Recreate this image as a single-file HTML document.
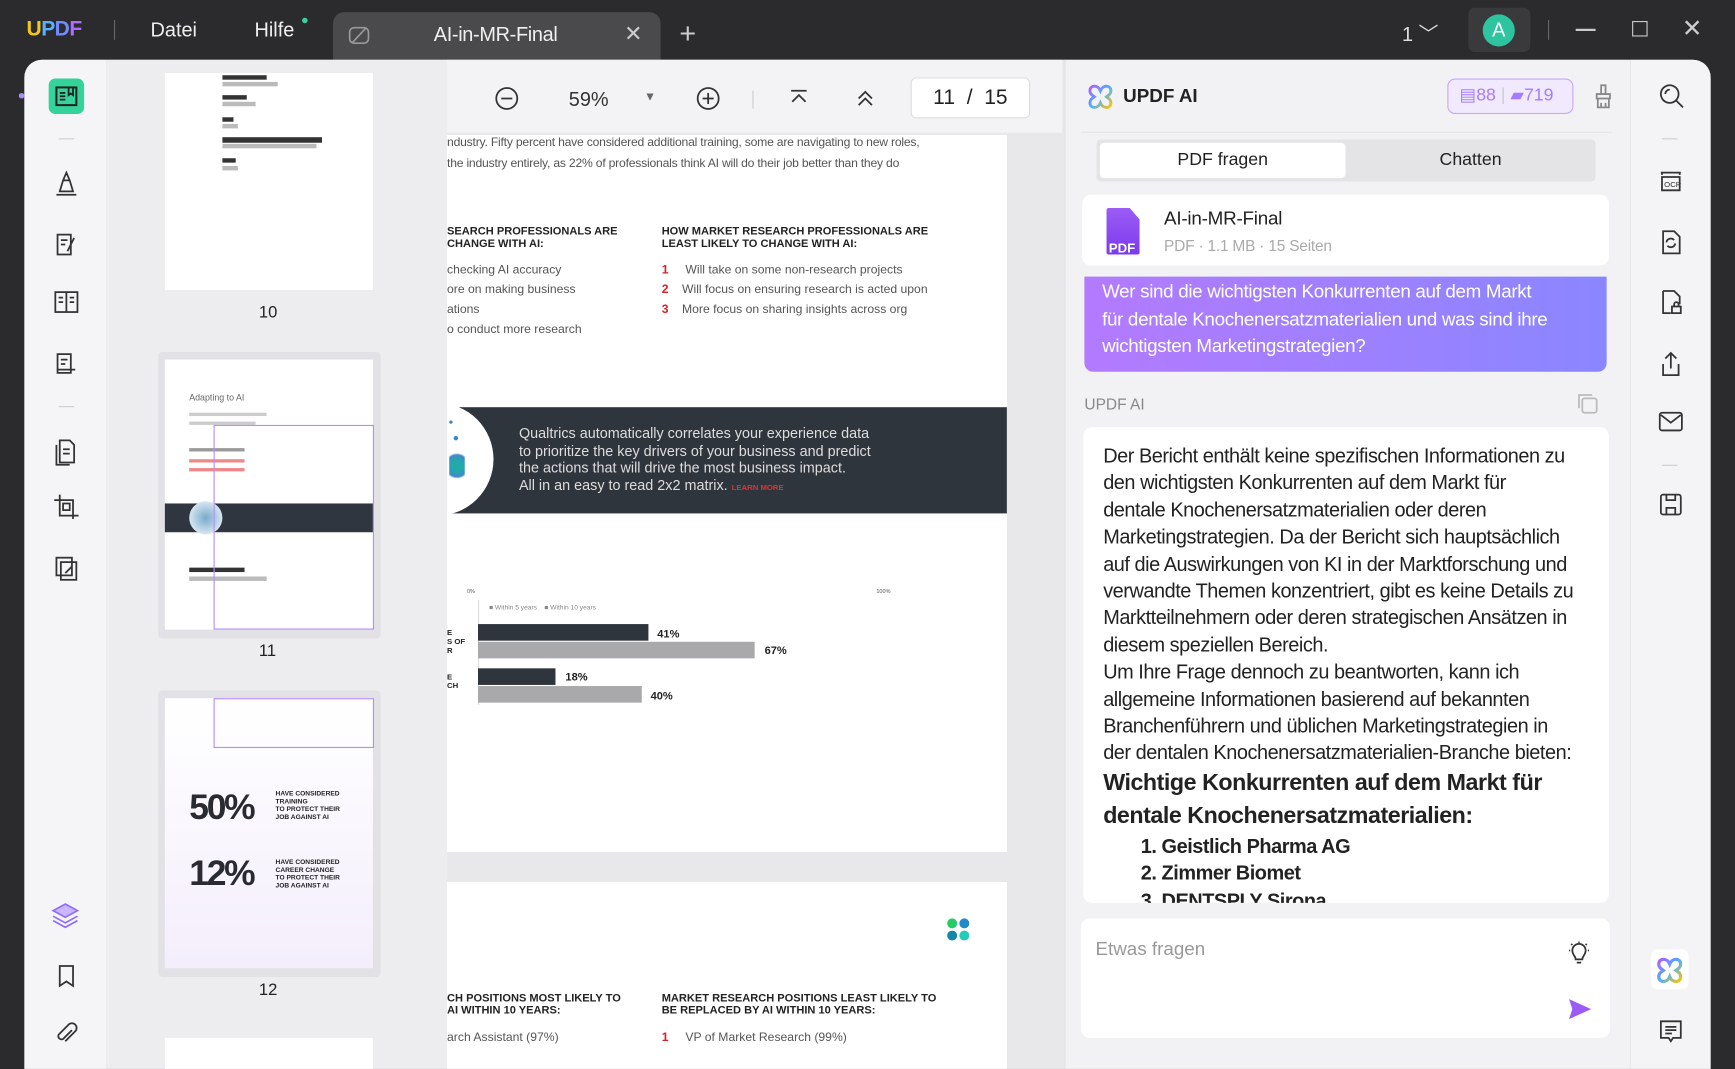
<!DOCTYPE html>
<html><head><meta charset="utf-8"><style>
*{margin:0;padding:0;box-sizing:border-box}
html,body{width:1735px;height:1069px;overflow:hidden;background:#2b2b2d;font-family:"Liberation Sans",sans-serif}
#w{position:absolute;left:0;top:0;width:1568px;height:966px;transform:scale(1.10651);transform-origin:0 0;background:#2b2b2d}
.a{position:absolute}
.ic{position:absolute;stroke:#333;fill:none;stroke-width:1.6}
.t{font-size:11px;color:#555;position:absolute;white-space:nowrap}
.h{font-size:10px;font-weight:bold;color:#222;position:absolute;line-height:11px}
.n{color:#d81f2a;font-weight:bold}
</style></head><body><div id="w">
<div class="a" style="left:24px;top:16px;font-size:19px;font-weight:bold;letter-spacing:-0.5px"><span style="color:#f5c518">U</span><span style="color:#5ab0ff">P</span><span style="color:#6f8bff">D</span><span style="color:#b06cff">F</span></div>
<div class="a" style="left:103px;top:18px;width:1px;height:18px;background:#666"></div>
<div class="a" style="left:136px;top:17px;color:#eee;font-size:18px">Datei</div>
<div class="a" style="left:230px;top:17px;color:#eee;font-size:18px">Hilfe</div>
<div class="a" style="left:273px;top:16px;width:5px;height:5px;border-radius:50%;background:#3ad0a0"></div>
<div class="a" style="left:301px;top:11px;width:296px;height:48px;background:#4a4a4c;border-radius:10px 10px 0 0"></div>
<svg class="a" style="left:314px;top:22px" width="22" height="20" viewBox="0 0 22 20"><rect x="2" y="3" width="17" height="14" rx="4" fill="none" stroke="#999" stroke-width="1.5"/><path d="M4 17L17 3" stroke="#999" stroke-width="1.5"/></svg>
<div class="a" style="left:392px;top:21px;color:#f0f0f0;font-size:18px;letter-spacing:-0.3px">AI-in-MR-Final</div>
<div class="a" style="left:564px;top:18px;color:#ccc;font-size:20px">✕</div>
<div class="a" style="left:614px;top:15px;color:#ccc;font-size:26px;font-weight:300">+</div>
<div class="a" style="left:1267px;top:17px;color:#ddd;font-size:18px">1 ﹀</div>
<div class="a" style="left:1327px;top:7px;width:56px;height:40px;background:#3a3a3c;border-radius:6px"></div>
<div class="a" style="left:1340px;top:13px;width:29px;height:29px;border-radius:50%;background:#2ec4a0;color:#fff;font-size:18px;text-align:center;line-height:29px">A</div>
<div class="a" style="left:1399px;top:18px;width:1px;height:18px;background:#666"></div>
<div class="a" style="left:1424px;top:26px;width:18px;height:1.5px;background:#ccc"></div>
<div class="a" style="left:1475px;top:19px;width:14px;height:14px;border:1.5px solid #ccc"></div>
<div class="a" style="left:1520px;top:13px;color:#ccc;font-size:22px">✕</div>

<div class="a" style="left:22px;top:54px;width:1524px;height:912px;background:#f3f3f5;border-radius:16px 16px 0 0;overflow:hidden">
  <div class="a" style="left:0;top:0;width:75px;height:912px;background:#f5f5f7;border-right:1px solid #e6e6e8"></div>
  <div class="a" style="left:22px;top:17px;width:32px;height:32px;border-radius:6px;background:#34d39a"></div>
  <svg class="a" style="left:26px;top:21px" width="24" height="24" viewBox="0 0 24 24"><rect x="3" y="4" width="18" height="16" fill="none" stroke="#222" stroke-width="1.8"/><path d="M6 9h5M6 12h5M6 15h5M14 4v7l2-1.5 2 1.5V4" stroke="#222" stroke-width="1.6" fill="none"/></svg>
  <div class="a" style="left:31px;top:71px;width:14px;height:1px;background:#ccc"></div>
  <svg class="ic" style="left:24px;top:98px" width="28" height="28" viewBox="0 0 28 28"><path d="M8 21l3-10 6 0 3 10zM11 11l3-7 3 7M5 24h18"/></svg>
  <svg class="ic" style="left:24px;top:153px" width="28" height="28" viewBox="0 0 28 28"><path d="M6 5h12v18H6zM9 10h6M9 14h4M21 8l-6 12"/></svg>
  <svg class="ic" style="left:24px;top:205px" width="28" height="28" viewBox="0 0 28 28"><rect x="4" y="5" width="20" height="18"/><path d="M14 5v18M7 10h4M7 14h4M17 10h4M17 14h4"/></svg>
  <svg class="ic" style="left:24px;top:260px" width="28" height="28" viewBox="0 0 28 28"><path d="M6 6h12v17H6zM9 11h6M9 15h4M6 20h16"/></svg>
  <div class="a" style="left:31px;top:313px;width:14px;height:1px;background:#ccc"></div>
  <svg class="ic" style="left:24px;top:340px" width="28" height="28" viewBox="0 0 28 28"><path d="M8 4h9l4 4v16H8zM11 12h6M11 16h6M5 8v18h12"/></svg>
  <svg class="ic" style="left:24px;top:390px" width="28" height="28" viewBox="0 0 28 28"><path d="M8 3v19h17M3 8h17v17M11 11h6v6h-6z"/></svg>
  <svg class="ic" style="left:24px;top:445px" width="28" height="28" viewBox="0 0 28 28"><rect x="5" y="5" width="14" height="16"/><rect x="9" y="9" width="14" height="16"/><path d="M13 19l6-6"/></svg>
  <svg class="a" style="left:22px;top:758px" width="30" height="30" viewBox="0 0 30 30"><path d="M15 5l11 6-11 6-11-6z" fill="#c9b6ff" stroke="#8f6bff" stroke-width="1.5"/><path d="M4 16l11 6 11-6M4 20l11 6 11-6" fill="none" stroke="#8f6bff" stroke-width="1.5"/></svg>
  <svg class="ic" style="left:25px;top:815px" width="26" height="26" viewBox="0 0 26 26"><path d="M7 4h12v18l-6-4-6 4z"/></svg>
  <svg class="ic" style="left:25px;top:868px" width="26" height="26" viewBox="0 0 26 26"><path d="M18 9l-8 8a3 3 0 0 1-4-4l9-9a4 4 0 0 1 6 6l-9 9"/></svg>

  <div class="a" style="left:76px;top:0;width:306px;height:912px;background:#ededf0"></div>
  <div class="a" style="left:127px;top:12px;width:188px;height:196px;background:#fff">
    <div class="a" style="left:52px;top:2px;width:40px;height:4px;background:#333"></div><div class="a" style="left:52px;top:8px;width:50px;height:4px;background:#bbb"></div>
    <div class="a" style="left:52px;top:20px;width:22px;height:4px;background:#333"></div><div class="a" style="left:52px;top:26px;width:30px;height:4px;background:#bbb"></div>
    <div class="a" style="left:52px;top:40px;width:10px;height:4px;background:#333"></div><div class="a" style="left:52px;top:46px;width:14px;height:4px;background:#bbb"></div>
    <div class="a" style="left:52px;top:58px;width:90px;height:5px;background:#333"></div><div class="a" style="left:52px;top:64px;width:85px;height:4px;background:#bbb"></div>
    <div class="a" style="left:52px;top:77px;width:12px;height:4px;background:#333"></div><div class="a" style="left:52px;top:84px;width:14px;height:4px;background:#bbb"></div>
  </div>
  <div class="a" style="left:212px;top:220px;font-size:15px;color:#222">10</div>
  <div class="a" style="left:121px;top:264px;width:201px;height:259px;background:#e2e2e6;border-radius:4px"></div>
  <div class="a" style="left:127px;top:271px;width:188px;height:244px;background:#fff">
    <div class="t" style="left:22px;top:30px;font-size:8px;color:#666">Adapting to AI</div>
    <div class="a" style="left:22px;top:48px;width:70px;height:3px;background:#ccc"></div>
    <div class="a" style="left:22px;top:56px;width:60px;height:3px;background:#ccc"></div>
    <div class="a" style="left:22px;top:80px;width:50px;height:3px;background:#999"></div>
    <div class="a" style="left:22px;top:90px;width:50px;height:3px;background:#e88"></div>
    <div class="a" style="left:22px;top:98px;width:50px;height:3px;background:#e88"></div>
    <div class="a" style="left:0;top:130px;width:188px;height:26px;background:#2f3640"></div>
    <div class="a" style="left:22px;top:128px;width:30px;height:30px;border-radius:50%;background:radial-gradient(#7ac,#fff)"></div>
    <div class="a" style="left:22px;top:188px;width:50px;height:4px;background:#333"></div><div class="a" style="left:22px;top:196px;width:70px;height:4px;background:#bbb"></div>
  </div>
  <div class="a" style="left:171px;top:330px;width:145px;height:185px;border:1.5px solid #b48cff"></div>
  <div class="a" style="left:212px;top:526px;font-size:15px;color:#222">11</div>
  <div class="a" style="left:121px;top:570px;width:201px;height:259px;background:#e2e2e6;border-radius:4px"></div>
  <div class="a" style="left:127px;top:577px;width:188px;height:244px;background:linear-gradient(#fff,#f4eefc)">
    <div class="a" style="left:22px;top:80px;font-size:32px;font-weight:bold;color:#2a2a33;letter-spacing:-2px">50%</div>
    <div class="a" style="left:22px;top:140px;font-size:32px;font-weight:bold;color:#2a2a33;letter-spacing:-2px">12%</div>
    <div class="h" style="left:100px;top:84px;font-size:6px;line-height:7px">HAVE CONSIDERED<br>TRAINING<br>TO PROTECT THEIR<br>JOB AGAINST AI</div>
    <div class="h" style="left:100px;top:146px;font-size:6px;line-height:7px">HAVE CONSIDERED<br>CAREER CHANGE<br>TO PROTECT THEIR<br>JOB AGAINST AI</div>
  </div>
  <div class="a" style="left:171px;top:577px;width:145px;height:45px;border:1.5px solid #b48cff"></div>
  <div class="a" style="left:212px;top:832px;font-size:15px;color:#222">12</div>
  <div class="a" style="left:127px;top:884px;width:188px;height:30px;background:#fff"></div>

  <div class="a" style="left:382px;top:0;width:558px;height:912px;background:#e8e8eb"></div>
  <div class="a" style="left:382px;top:0;width:556px;height:66px;background:#f3f3f5"></div>
  <svg class="ic" style="left:425px;top:24px" width="22" height="22" viewBox="0 0 22 22"><circle cx="11" cy="11" r="9.5"/><path d="M6 11h10"/></svg>
  <div class="a" style="left:492px;top:26px;font-size:18px;color:#333">59%</div>
  <div class="a" style="left:560px;top:28px;font-size:11px;color:#666">▼</div>
  <svg class="ic" style="left:607px;top:24px" width="22" height="22" viewBox="0 0 22 22"><circle cx="11" cy="11" r="9.5"/><path d="M6 11h10M11 6v10"/></svg>
  <div class="a" style="left:658px;top:28px;width:1px;height:16px;background:#ccc"></div>
  <svg class="ic" style="left:690px;top:26px" width="20" height="18" viewBox="0 0 20 18"><path d="M3 2h14M4 12l6-6 6 6"/></svg>
  <svg class="ic" style="left:750px;top:26px" width="20" height="18" viewBox="0 0 20 18"><path d="M4 9l6-6 6 6M4 15l6-6 6 6"/></svg>
  <div class="a" style="left:801px;top:16px;width:108px;height:37px;background:#fff;border:1px solid #ddd;border-radius:5px;font-size:19px;color:#222;text-align:center;line-height:35px">11 &nbsp;/&nbsp; 15</div>
  <div class="a" style="left:382px;top:68px;width:506px;height:648px;background:#fff;overflow:hidden">
    <div class="t" style="left:0;top:1px;letter-spacing:-0.2px">ndustry. Fifty percent have considered additional training, some are navigating to new roles,</div>
    <div class="t" style="left:0;top:20px;letter-spacing:-0.2px">the industry entirely, as 22% of professionals think AI will do their job better than they do</div>
    <div class="h" style="left:0;top:82px">SEARCH PROFESSIONALS ARE<br>CHANGE WITH AI:</div>
    <div class="h" style="left:194px;top:82px">HOW MARKET RESEARCH PROFESSIONALS ARE<br>LEAST LIKELY TO CHANGE WITH AI:</div>
    <div class="t" style="left:0;top:116px">checking AI accuracy</div>
    <div class="t" style="left:0;top:134px">ore on making business</div>
    <div class="t" style="left:0;top:152px">ations</div>
    <div class="t" style="left:0;top:170px">o conduct more research</div>
    <div class="t" style="left:194px;top:116px"><span class="n">1</span>&nbsp;&nbsp;&nbsp;&nbsp;&nbsp;Will take on some non-research projects</div>
    <div class="t" style="left:194px;top:134px"><span class="n">2</span>&nbsp;&nbsp;&nbsp;&nbsp;Will focus on ensuring research is acted upon</div>
    <div class="t" style="left:194px;top:152px"><span class="n">3</span>&nbsp;&nbsp;&nbsp;&nbsp;More focus on sharing insights across org</div>
    <div class="a" style="left:0;top:246px;width:506px;height:96px;background:#2f353c"></div>
    <div class="a" style="left:-60px;top:242px;width:102px;height:102px;border-radius:50%;background:#fff"></div>
    <div class="a" style="left:2px;top:258px;width:3px;height:3px;border-radius:50%;background:#38c"></div>
    <div class="a" style="left:6px;top:272px;width:4px;height:4px;border-radius:50%;background:#38c"></div>
    <div class="a" style="left:2px;top:284px;width:14px;height:30px;background:radial-gradient(circle,#2aa 30%,#48c 60%,transparent 70%)"></div>
    <div class="a" style="left:65px;top:262px;color:#ddd;font-size:13px;line-height:15.5px">Qualtrics automatically correlates your experience data<br>to prioritize the key drivers of your business and predict<br>the actions that will drive the most business impact.<br>All in an easy to read 2x2 matrix. <span style="color:#d33;font-size:7px;font-weight:bold">LEARN MORE</span></div>
    <div class="t" style="left:18px;top:410px;font-size:5px">0%</div><div class="t" style="left:388px;top:410px;font-size:5px">100%</div>
    <div class="t" style="left:38px;top:425px;font-size:6px;color:#888">■ Within 5 years &nbsp;&nbsp; ■ Within 10 years</div>
    <div class="a" style="left:28px;top:420px;width:1px;height:95px;background:#ddd"></div>
    <div class="a" style="left:28px;top:442px;width:154px;height:15px;background:#2f353c"></div><div class="h" style="left:190px;top:446px">41%</div>
    <div class="a" style="left:28px;top:458px;width:250px;height:15px;background:#a9a9ab"></div><div class="h" style="left:287px;top:461px">67%</div>
    <div class="a" style="left:28px;top:482px;width:70px;height:15px;background:#2f353c"></div><div class="h" style="left:107px;top:485px">18%</div>
    <div class="a" style="left:28px;top:498px;width:148px;height:15px;background:#a9a9ab"></div><div class="h" style="left:184px;top:502px">40%</div>
    <div class="h" style="left:0;top:447px;font-size:7px;line-height:8px">E<br>S OF<br>R</div>
    <div class="h" style="left:0;top:487px;font-size:7px;line-height:8px">E<br>CH</div>
  </div>
  <div class="a" style="left:382px;top:743px;width:506px;height:169px;background:#fff;overflow:hidden">
    <div class="a" style="left:452px;top:33px;width:9px;height:9px;border-radius:50%;background:#2c6"></div>
    <div class="a" style="left:463px;top:33px;width:9px;height:9px;border-radius:50%;background:#28c"></div>
    <div class="a" style="left:452px;top:44px;width:9px;height:9px;border-radius:50%;background:#18a"></div>
    <div class="a" style="left:463px;top:44px;width:9px;height:9px;border-radius:50%;background:#2cb"></div>
    <div class="h" style="left:0;top:100px">CH POSITIONS MOST LIKELY TO<br>AI WITHIN 10 YEARS:</div>
    <div class="h" style="left:194px;top:100px">MARKET RESEARCH POSITIONS LEAST LIKELY TO<br>BE REPLACED BY AI WITHIN 10 YEARS:</div>
    <div class="t" style="left:0;top:135px">arch Assistant (97%)</div>
    <div class="t" style="left:194px;top:135px"><span class="n">1</span>&nbsp;&nbsp;&nbsp;&nbsp;&nbsp;VP of Market Research (99%)</div>
  </div>

  <div class="a" style="left:940px;top:0;width:510px;height:912px;background:#f2f2f4;border-left:1px solid #e2e2e4"></div>
  <svg class="a" style="left:960px;top:21px" width="25" height="25" viewBox="0 0 25 25"><path d="M12.5 7C10 1 3 2 3 7c0 3 2 4 4 5.5C5 14 3 15 3 18c0 5 7 6 9.5 0 2.5 6 9.5 5 9.5 0 0-3-2-4-4-5.5 2-1.5 4-2.5 4-5.5 0-5-7-6-9.5 0z" fill="none" stroke="url(#g)" stroke-width="2.6"/><defs><linearGradient id="g" x1="0" y1="0" x2="1" y2="1"><stop offset="0" stop-color="#b05cff"/><stop offset=".5" stop-color="#4ab0ff"/><stop offset="1" stop-color="#ffc400"/></linearGradient></defs></svg>
  <div class="a" style="left:993px;top:23px;font-size:17px;font-weight:bold;color:#222">UPDF AI</div>
  <div class="a" style="left:1286px;top:17px;width:114px;height:32px;border:1.5px solid #c6a6ff;border-radius:7px;background:#f1eafe;color:#a67cff;font-size:16px;line-height:29px;padding-left:10px">▤88 <span style="color:#ccc">|</span> ▰719</div>
  <svg class="ic" style="left:1417px;top:21px;stroke:#888" width="20" height="24" viewBox="0 0 20 24"><path d="M8 2h4v8H8zM4 10h12v4H4zM5 14h10v8H5zM8 18v4M12 18v4"/></svg>
  <div class="a" style="left:955px;top:65px;width:480px;height:1px;background:#e4e4e6"></div>
  <div class="a" style="left:969px;top:72px;width:451px;height:38px;background:#e4e4e6;border-radius:4px"></div>
  <div class="a" style="left:972px;top:75px;width:222px;height:32px;background:#fff;border-radius:4px;text-align:center;line-height:32px;font-size:16px;color:#222">PDF fragen</div>
  <div class="a" style="left:1196px;top:75px;width:222px;height:32px;text-align:center;line-height:32px;font-size:16px;color:#222">Chatten</div>
  <div class="a" style="left:956px;top:122px;width:476px;height:64px;background:#fff;border-radius:8px"></div>
  <div class="a" style="left:978px;top:134px;width:30px;height:42px;background:linear-gradient(#9b5cf6,#7c3aed);clip-path:polygon(0 0,70% 0,100% 25%,100% 100%,0 100%);border-radius:2px"></div>
  <div class="a" style="left:980px;top:163px;font-size:12px;font-weight:bold;color:#fff">PDF</div>
  <div class="a" style="left:1030px;top:134px;font-size:17px;color:#222;letter-spacing:-0.2px">AI-in-MR-Final</div>
  <div class="a" style="left:1030px;top:160px;font-size:14px;color:#aaa;letter-spacing:-0.2px">PDF · 1.1 MB · 15 Seiten</div>
  <div class="a" style="left:958px;top:196px;width:472px;height:86px;border-radius:0 0 8px 8px;background:linear-gradient(90deg,#b37aff,#8a86ff);color:#fff;font-size:17px;line-height:24.5px;padding:2px 10px 2px 16px;letter-spacing:-0.3px;white-space:nowrap">Wer sind die wichtigsten Konkurrenten auf dem Markt<br>für dentale Knochenersatzmaterialien und was sind ihre<br>wichtigsten Marketingstrategien?</div>
  <div class="a" style="left:958px;top:303px;font-size:14px;color:#888">UPDF AI</div>
  <svg class="ic" style="left:1402px;top:300px;stroke:#bbb" width="22" height="22" viewBox="0 0 22 22"><rect x="6" y="6" width="13" height="13" rx="2"/><path d="M3 15V3h12"/></svg>
  <div class="a" style="left:957px;top:332px;width:475px;height:430px;background:#fff;border-radius:8px;overflow:hidden;padding:14px 10px 14px 18px;font-size:18px;line-height:24.4px;color:#222;letter-spacing:-0.42px;white-space:nowrap">Der Bericht enthält keine spezifischen Informationen zu<br>den wichtigsten Konkurrenten auf dem Markt für<br>dentale Knochenersatzmaterialien oder deren<br>Marketingstrategien. Da der Bericht sich hauptsächlich<br>auf die Auswirkungen von KI in der Marktforschung und<br>verwandte Themen konzentriert, gibt es keine Details zu<br>Marktteilnehmern oder deren strategischen Ansätzen in<br>diesem speziellen Bereich.<br>Um Ihre Frage dennoch zu beantworten, kann ich<br>allgemeine Informationen basierend auf bekannten<br>Branchenführern und üblichen Marketingstrategien in<br>der dentalen Knochenersatzmaterialien-Branche bieten:<div style="font-weight:bold;font-size:21px;line-height:30px">Wichtige Konkurrenten auf dem Markt für<br>dentale Knochenersatzmaterialien:</div><div style="font-weight:bold;padding-left:34px">1. Geistlich Pharma AG<br>2. Zimmer Biomet<br>3. DENTSPLY Sirona</div></div>
  <div class="a" style="left:955px;top:776px;width:478px;height:108px;background:#fff;border-radius:8px"></div>
  <div class="a" style="left:968px;top:794px;font-size:17px;color:#999">Etwas fragen</div>
  <svg class="ic" style="left:1393px;top:796px" width="24" height="24" viewBox="0 0 24 24"><path d="M9 17c0-3-3-4-3-8a6 6 0 0 1 12 0c0 4-3 5-3 8zM10 20h4M12 1v1M3 9h1M20 9h1M5 3l1 1M19 3l-1 1"/></svg>
  <svg class="a" style="left:1395px;top:848px" width="22" height="20" viewBox="0 0 22 20"><path d="M1 1l20 9-20 9 3-9z" fill="#9b5cf6"/></svg>

  <div class="a" style="left:1451px;top:0;width:73px;height:912px;background:#f4f4f6;border-left:1px solid #e6e6e8"></div>
  <svg class="ic" style="left:1476px;top:20px" width="26" height="26" viewBox="0 0 26 26"><circle cx="11" cy="11" r="8"/><path d="M17 17l6 6M7 11a4 4 0 0 1 4-4"/></svg>
  <div class="a" style="left:1480px;top:71px;width:14px;height:1px;background:#ccc"></div>
  <svg class="ic" style="left:1475px;top:96px" width="26" height="26" viewBox="0 0 26 26"><path d="M4 6h18M5 6v2M21 6v2M5 10h16v12H5z"/><text x="7" y="19" font-size="7" fill="#333" stroke="none" font-family="Liberation Sans">OCR</text></svg>
  <svg class="ic" style="left:1476px;top:152px" width="24" height="26" viewBox="0 0 24 26"><path d="M5 3h10l5 5v15H5zM8 13a4 4 0 0 1 7-2M16 14a4 4 0 0 1-7 2"/></svg>
  <svg class="ic" style="left:1476px;top:206px" width="24" height="26" viewBox="0 0 24 26"><path d="M5 3h10l5 5v7M12 23H5V3M13 17h8v6h-8zM15 17v-2a2 2 0 0 1 4 0v2"/></svg>
  <svg class="ic" style="left:1476px;top:262px" width="24" height="26" viewBox="0 0 24 26"><path d="M12 3v14M7 8l5-5 5 5M5 13v10h14V13"/></svg>
  <svg class="ic" style="left:1476px;top:316px" width="24" height="22" viewBox="0 0 24 22"><rect x="2" y="3" width="20" height="16" rx="2"/><path d="M3 5l9 7 9-7"/></svg>
  <div class="a" style="left:1480px;top:366px;width:14px;height:1px;background:#ccc"></div>
  <svg class="ic" style="left:1476px;top:390px" width="24" height="24" viewBox="0 0 24 24"><rect x="3" y="3" width="18" height="18" rx="2"/><path d="M8 3v5h8V3M8 21v-6h8v6"/></svg>
  <div class="a" style="left:1470px;top:804px;width:34px;height:36px;background:#fff;border-radius:6px"></div>
  <svg class="a" style="left:1474px;top:810px" width="26" height="26" viewBox="0 0 25 25"><path d="M12.5 7C10 1 3 2 3 7c0 3 2 4 4 5.5C5 14 3 15 3 18c0 5 7 6 9.5 0 2.5 6 9.5 5 9.5 0 0-3-2-4-4-5.5 2-1.5 4-2.5 4-5.5 0-5-7-6-9.5 0z" fill="none" stroke="url(#g)" stroke-width="2.8"/></svg>
  <svg class="ic" style="left:1476px;top:866px" width="24" height="26" viewBox="0 0 24 26"><path d="M3 3h18v15h-7l-2 3-2-3H3zM7 8h10M7 11h10M7 14h6"/></svg>
</div>
<div class="a" style="left:17px;top:84px;width:5px;height:5px;border-radius:50%;background:#a78bfa"></div>
</div></body></html>
